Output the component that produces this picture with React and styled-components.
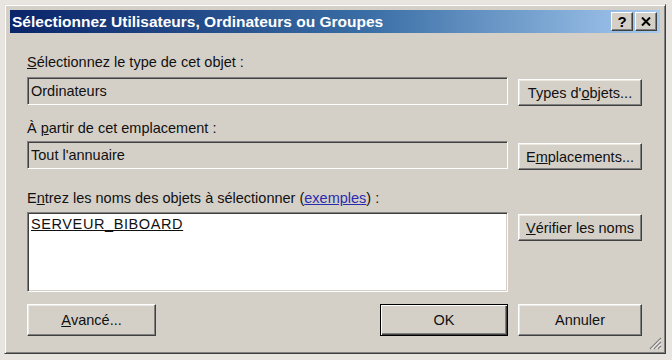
import styled, { createGlobalStyle } from 'styled-components';

const GlobalStyle = createGlobalStyle`
  html, body {
    margin: 0;
    padding: 0;
    background: #e8e5e0;
  }
  body {
    font-family: "Liberation Sans", Arial, sans-serif;
  }
`;

const Window = styled.div`
  position: relative;
  box-sizing: border-box;
  width: 662px;
  height: 350px;
  margin: 4px 0 0 4px;
  padding: 5px;
  background: #d4d0c8;
  border: 1px solid;
  border-color: #e4e1dc #404040 #404040 #e4e1dc;
  box-shadow: inset 1px 1px #fff, inset -1px -1px #808080;
  display: flex;
  flex-direction: column;
`;

const TitleBar = styled.div`
  height: 23px;
  display: flex;
  align-items: center;
  padding: 0 3px 0 2px;
  background: linear-gradient(to right, #0a246a 0%, #3a6ea5 55%, #a6caf0 100%);
`;

const Title = styled.div`
  flex: 1;
  color: #fff;
  font-weight: bold;
  font-size: 15.5px;
  white-space: nowrap;
`;

const CaptionButton = styled.div`
  box-sizing: border-box;
  width: 22px;
  height: 19px;
  margin-left: ${({ $gap }) => $gap || 0}px;
  display: flex;
  align-items: center;
  justify-content: center;
  background: #d4d0c8;
  border: 1px solid;
  border-color: #fff #404040 #404040 #fff;
  box-shadow: inset -1px -1px #808080;
  font-weight: bold;
  font-size: 15px;
  color: #000;
`;

const Content = styled.div`
  flex: 1;
  display: flex;
  flex-direction: column;
  padding: 0 18px 0 17px;
`;

const Label = styled.div`
  font-size: 14.5px;
  line-height: 16px;
  height: 16px;
  color: #111;
  margin-top: ${({ $top }) => $top}px;
  white-space: nowrap;
`;

const U = styled.span`
  text-decoration: underline;
`;

const Link = styled.span`
  color: #2b2bb0;
  text-decoration: underline;
`;

const Row = styled.div`
  display: flex;
  align-items: flex-start;
  gap: 10px;
  margin-top: ${({ $top }) => $top}px;
`;

const Field = styled.div`
  box-sizing: border-box;
  width: 481px;
  height: ${({ $h }) => $h}px;
  padding: ${({ $multi }) => ($multi ? '3px 3px' : '0 3px')};
  display: flex;
  align-items: ${({ $multi }) => ($multi ? 'flex-start' : 'center')};
  background: ${({ $multi }) => ($multi ? '#fff' : '#d4d0c8')};
  border: 1px solid;
  border-color: #808080 #fff #fff #808080;
  box-shadow: inset 1px 1px #404040, inset -1px -1px #d4d0c8;
  font-size: 14.5px;
  color: #111;
`;

const Resolved = styled.span`
  text-decoration: underline;
  letter-spacing: 0.6px;
`;

const Button = styled.div`
  box-sizing: border-box;
  width: ${({ $w }) => $w || 124}px;
  height: ${({ $h }) => $h || 27}px;
  margin-top: ${({ $top }) => $top || 0}px;
  display: flex;
  align-items: center;
  justify-content: center;
  background: #d4d0c8;
  border: 1px solid;
  border-color: #fff #404040 #404040 #fff;
  box-shadow: inset -1px -1px #808080, inset 1px 1px #ebe9e4;
  font-size: 14.5px;
  color: #111;
  white-space: nowrap;
`;

const DefaultButton = styled(Button)`
  border-color: #000;
  box-shadow: inset 1px 1px #fff, inset -1px -1px #404040, inset -2px -2px #808080;
`;

const Footer = styled.div`
  display: flex;
  align-items: flex-start;
  margin-top: 12px;
`;

const Spacer = styled.div`
  flex: 1;
`;

const Grip = styled.svg`
  position: absolute;
  right: 3px;
  bottom: 3px;
`;

export default function App() {
  return (
    <>
      <GlobalStyle />
      <Window>
        <TitleBar>
          <Title>Sélectionnez Utilisateurs, Ordinateurs ou Groupes</Title>
          <CaptionButton>?</CaptionButton>
          <CaptionButton $gap={2}>
            <svg width="10" height="9" viewBox="0 0 10 9">
              <path d="M1 0.5 L9 8.5 M9 0.5 L1 8.5" stroke="#000" strokeWidth="2" />
            </svg>
          </CaptionButton>
        </TitleBar>
        <Content>
          <Label $top={21}>
            <U>S</U>électionnez le type de cet objet :
          </Label>
          <Row $top={7}>
            <Field $h={28}>Ordinateurs</Field>
            <Button $top={2}>
              Types d'<U>o</U>bjets...
            </Button>
          </Row>

          <Label $top={14}>
            À <U>p</U>artir de cet emplacement :
          </Label>
          <Row $top={5}>
            <Field $h={28}>Tout l'annuaire</Field>
            <Button $top={2}>
              E<U>m</U>placements...
            </Button>
          </Row>

          <Label $top={20}>
            E<U>n</U>trez les noms des objets à sélectionner (<Link>exemples</Link>) :
          </Label>
          <Row $top={6}>
            <Field $h={80} $multi>
              <Resolved>SERVEUR_BIBOARD</Resolved>
            </Field>
            <Button $top={2}>
              <U>V</U>érifier les noms
            </Button>
          </Row>

          <Footer>
            <Button $w={129} $h={32}>
              <U>A</U>vancé...
            </Button>
            <Spacer />
            <DefaultButton $w={128} $h={32}>OK</DefaultButton>
            <Button $w={124} $h={32} style={{ marginLeft: 10 }}>
              Annuler
            </Button>
          </Footer>
        </Content>
        <Grip width="14" height="14" viewBox="0 0 14 14">
          <path d="M13 2 L2 13 M13 6 L6 13 M13 10 L10 13" stroke="#808080" strokeWidth="1.4" />
          <path d="M13 3.5 L3.5 13 M13 7.5 L7.5 13 M13 11.5 L11.5 13" stroke="#fff" strokeWidth="1" />
        </Grip>
      </Window>
    </>
  );
}
